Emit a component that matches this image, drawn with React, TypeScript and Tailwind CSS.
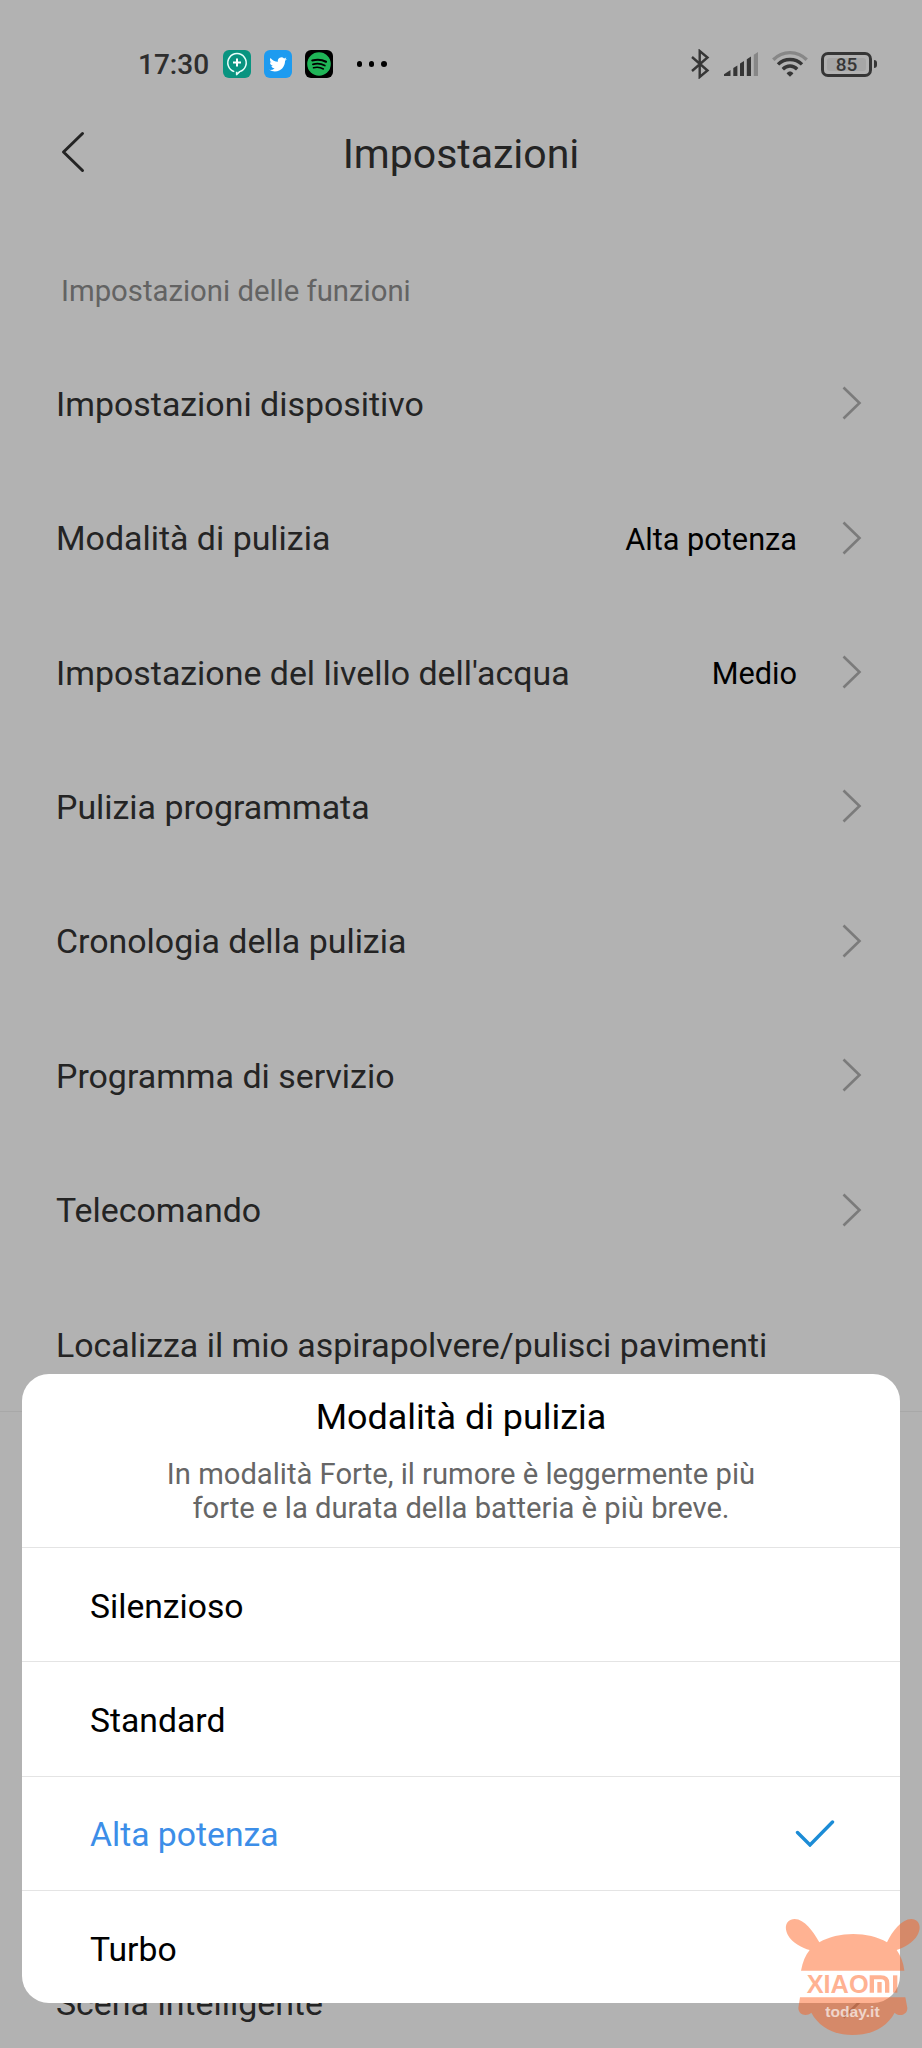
import React, { useState } from "react";

const rows = [
  { label: "Impostazioni dispositivo" },
  { label: "Modalità di pulizia", value: "Alta potenza" },
  { label: "Impostazione del livello dell'acqua", value: "Medio" },
  { label: "Pulizia programmata" },
  { label: "Cronologia della pulizia" },
  { label: "Programma di servizio" },
  { label: "Telecomando" },
  { label: "Localizza il mio aspirapolvere/pulisci pavimenti", plain: true },
];

const modes = ["Silenzioso", "Standard", "Alta potenza", "Turbo"];

function StatusBar() {
  return (
    <div className="flex h-32 items-center pl-[138px] pr-[45px]">
      <span className="relative top-px w-[71px] text-[28px] font-medium leading-none text-[#2e2e2e]">
        17:30
      </span>

      <div className="ml-[14px] flex gap-[13px]">
        <svg width="28" height="28" viewBox="0 0 28 28">
          <rect width="28" height="28" rx="6" fill="#099480" />
          <path
            d="M11.3 21.6 A9.2 9.2 0 1 1 16.7 21.6 L13.6 24.6 V21.8"
            fill="none"
            stroke="#e8fffb"
            strokeWidth="1.5"
            strokeLinejoin="round"
          />
          <path d="M14 8.5 V16.5 M10 12.5 H18" stroke="#fff" strokeWidth="2" />
        </svg>
        <svg width="28" height="28" viewBox="0 0 28 28">
          <rect width="28" height="28" rx="6" fill="#1d9bf0" />
          <path
            transform="translate(5.3 5.6) scale(0.73)"
            fill="#fff"
            d="M23.953 4.57a10 10 0 01-2.825.775 4.958 4.958 0 002.163-2.723c-.951.555-2.005.959-3.127 1.184a4.92 4.92 0 00-8.384 4.482C7.69 8.095 4.067 6.13 1.64 3.162a4.822 4.822 0 00-.666 2.475c0 1.71.87 3.213 2.188 4.096a4.904 4.904 0 01-2.228-.616v.06a4.923 4.923 0 003.946 4.827 4.996 4.996 0 01-2.212.085 4.936 4.936 0 004.604 3.417 9.867 9.867 0 01-6.102 2.105c-.39 0-.779-.023-1.17-.067a13.995 13.995 0 007.557 2.209c9.053 0 13.998-7.496 13.998-13.985 0-.21 0-.42-.015-.63A9.935 9.935 0 0024 4.59z"
          />
        </svg>
        <svg width="28" height="28" viewBox="0 0 28 28">
          <rect width="28" height="28" rx="6" fill="#000" />
          <circle cx="14" cy="14" r="11.8" fill="#1fb557" />
          <g fill="none" stroke="#000" strokeLinecap="round">
            <path d="M7.3 10.5 C12 9.2 17 9.6 21 11.7" strokeWidth="2.1" />
            <path d="M7.9 14.3 C12 13.2 16.2 13.6 19.8 15.5" strokeWidth="1.8" />
            <path d="M8.5 17.8 C12 17 15.4 17.3 18.4 19" strokeWidth="1.5" />
          </g>
        </svg>
      </div>

      <div className="ml-[24px] flex gap-[7px]">
        <i className="size-[5.2px] rounded-full bg-black" />
        <i className="size-[5.2px] rounded-full bg-black" />
        <i className="size-[5.2px] rounded-full bg-black" />
      </div>

      <div className="ml-auto flex items-center text-[#363636]">
        <svg width="20" height="30" viewBox="0 0 20 30">
          <path
            d="M2 8 L17.5 21.5 L9.7 28 V2 L17.5 8.5 L2 22"
            fill="none"
            stroke="currentColor"
            strokeWidth="2.4"
          />
        </svg>
        <svg className="ml-[14px]" width="36" height="26" viewBox="0 0 36 26">
          <g fill="currentColor">
            <path d="M0 25 V23.2 L6.5 19 V25 Z" />
            <path d="M9.3 25 V17 L13.4 14.5 V25 Z" />
            <path d="M16 25 V12.5 L20 10 V25 Z" />
            <path d="M22.8 25 V8.3 L27 5.6 V25 Z" />
            <path d="M29.8 25 V3.8 L34 1 V25 Z" opacity="0.35" />
          </g>
        </svg>
        <svg className="ml-[12px]" width="36" height="28" viewBox="0 0 36 28">
          <g fill="none" stroke="currentColor" strokeWidth="3.4">
            <path d="M1.3 9.8 C10.5 0.2 25.5 0.2 34.7 9.8" opacity="0.35" />
            <path d="M6 14.4 C12.8 7.8 23.2 7.8 30 14.4" />
            <path d="M10.8 19.2 C15 15 21 15 25.2 19.2" />
          </g>
          <path d="M18 26.8 L14.6 23.4 C16.5 20.9 19.5 20.9 21.4 23.4 Z" fill="currentColor" />
        </svg>
        <div className="ml-[13px] flex h-[25px] w-[51px] items-center justify-center rounded-[7px] border-3 border-[#363636] p-[3px]">
          <span className="flex h-full w-full items-center justify-center rounded-[3px] bg-[#a6a6a6] text-[19px] font-medium leading-none">
            85
          </span>
        </div>
        <i className="ml-[2px] h-[8px] w-[3px] rounded-r bg-[#363636]" />
      </div>
    </div>
  );
}

function Chevron() {
  return (
    <svg className="ml-[45px]" width="20" height="36" viewBox="0 0 20 36">
      <path d="M1.5 2.5 L17.5 18 L1.5 33.5" fill="none" stroke="#7b7b7b" strokeWidth="2.6" />
    </svg>
  );
}

function Row({ label, value, plain }: { label: string; value?: string; plain?: boolean }) {
  return (
    <div className="flex h-[134.4px] items-center pl-14 pr-[60px]">
      <span className="relative top-[2px] whitespace-nowrap text-[33.9px] text-[#242424]">
        {label}
      </span>
      <span className="relative top-[2px] ml-auto text-[30.7px] text-black">{value}</span>
      {!plain && <Chevron />}
    </div>
  );
}

function Watermark() {
  return (
    <svg
      className="absolute left-[770px] top-[1900px]"
      width="152"
      height="148"
      viewBox="0 0 456 444"
    >
      <g fill="#ff5a14" opacity="0.46">
        <path d="M93 212 C98 186 106 166 119 150 C98 146 66 128 54 106 C40 80 50 58 74 57 C104 58 128 92 148 127 C205 94 295 94 351 127 C368 92 394 58 424 57 C448 58 456 82 442 106 C430 128 402 144 380 150 C392 168 400 186 403 212 Z" />
        <path d="M90 292 H406 L412 324 C412 348 384 350 374 338 C350 382 306 405 248 405 C192 405 148 382 124 338 C110 350 86 346 85 324 Z" />
        <text
          x="110"
          y="278"
          fontSize="75"
          fontFamily="Liberation Sans, sans-serif"
          fontWeight="700"
          textLength="186"
          lengthAdjust="spacingAndGlyphs"
        >
          XIAO
        </text>
        <path d="M299 278 V226 H332 Q358 226 358 250 V278 H345 V250 Q345 238 333 238 H312 V278 Z" />
        <rect x="322" y="246" width="13" height="32" />
        <rect x="369" y="226" width="13" height="52" />
      </g>
      <text
        x="166"
        y="350"
        fontSize="43"
        fontFamily="Liberation Sans, sans-serif"
        fontWeight="700"
        textLength="163"
        lengthAdjust="spacingAndGlyphs"
        fill="#fff"
        opacity="0.65"
      >
        today.it
      </text>
    </svg>
  );
}

export default function App() {
  const [mode, setMode] = useState("Alta potenza");

  return (
    <div className="relative h-[2048px] w-[922px] overflow-hidden bg-[#b2b2b2] font-['Roboto',sans-serif]">
      <StatusBar />

      <header className="grid h-[52px] grid-cols-[100px_1fr_100px] items-center">
        <svg className="relative -top-[2px] ml-[60px]" width="26" height="42" viewBox="0 0 26 42">
          <path
            d="M22.5 2.5 L3.5 21 L22.5 39.5"
            fill="none"
            stroke="#242424"
            strokeWidth="3"
            strokeLinecap="round"
            strokeLinejoin="round"
          />
        </svg>
        <h1 className="text-center text-[41px] leading-none text-[#242424]">Impostazioni</h1>
      </header>

      <p className="mt-[89px] h-[67px] pl-[61px] text-[29.3px] leading-[44px] text-[#636363]">
        Impostazioni delle funzioni
      </p>

      <div className="border-b border-[#a8a8a8]">
        {rows.map((r) => (
          <Row key={r.label} {...r} />
        ))}
      </div>

      <div className="mt-[523px]">
        <Row label="Scena intelligente" />
      </div>

      {/* bottom sheet */}
      <div className="absolute left-[22px] top-[1374px] h-[629px] w-[878px] overflow-hidden rounded-[27px] bg-white">
        <div className="h-[173px] pt-[21px] text-center">
          <h2 className="text-[35.9px] leading-[44px] text-black">Modalità di pulizia</h2>
          <p className="mx-auto mt-[18px] w-[640px] text-[29.2px] leading-[34.4px] text-[#666]">
            In modalità Forte, il rumore è leggermente più
            <br />
            forte e la durata della batteria è più breve.
          </p>
        </div>
        {modes.map((m) => (
          <button
            key={m}
            onClick={() => setMode(m)}
            className="flex h-[114.3px] w-full items-center justify-between border-t border-[#e4e4e4] pl-[68px] pr-[65px] text-left text-[33.7px]"
          >
            <span className={m === mode ? "relative top-[2.5px] text-[#3c8ee8]" : "relative top-[2.5px] text-black"}>
              {m}
            </span>
            {m === mode && (
              <svg width="40" height="28" viewBox="0 0 40 28">
                <path
                  d="M2.5 13.5 L15 26 L37.5 3"
                  fill="none"
                  stroke="#1c8cd6"
                  strokeWidth="3.4"
                  strokeLinecap="round"
                />
              </svg>
            )}
          </button>
        ))}
      </div>

      <Watermark />
    </div>
  );
}
